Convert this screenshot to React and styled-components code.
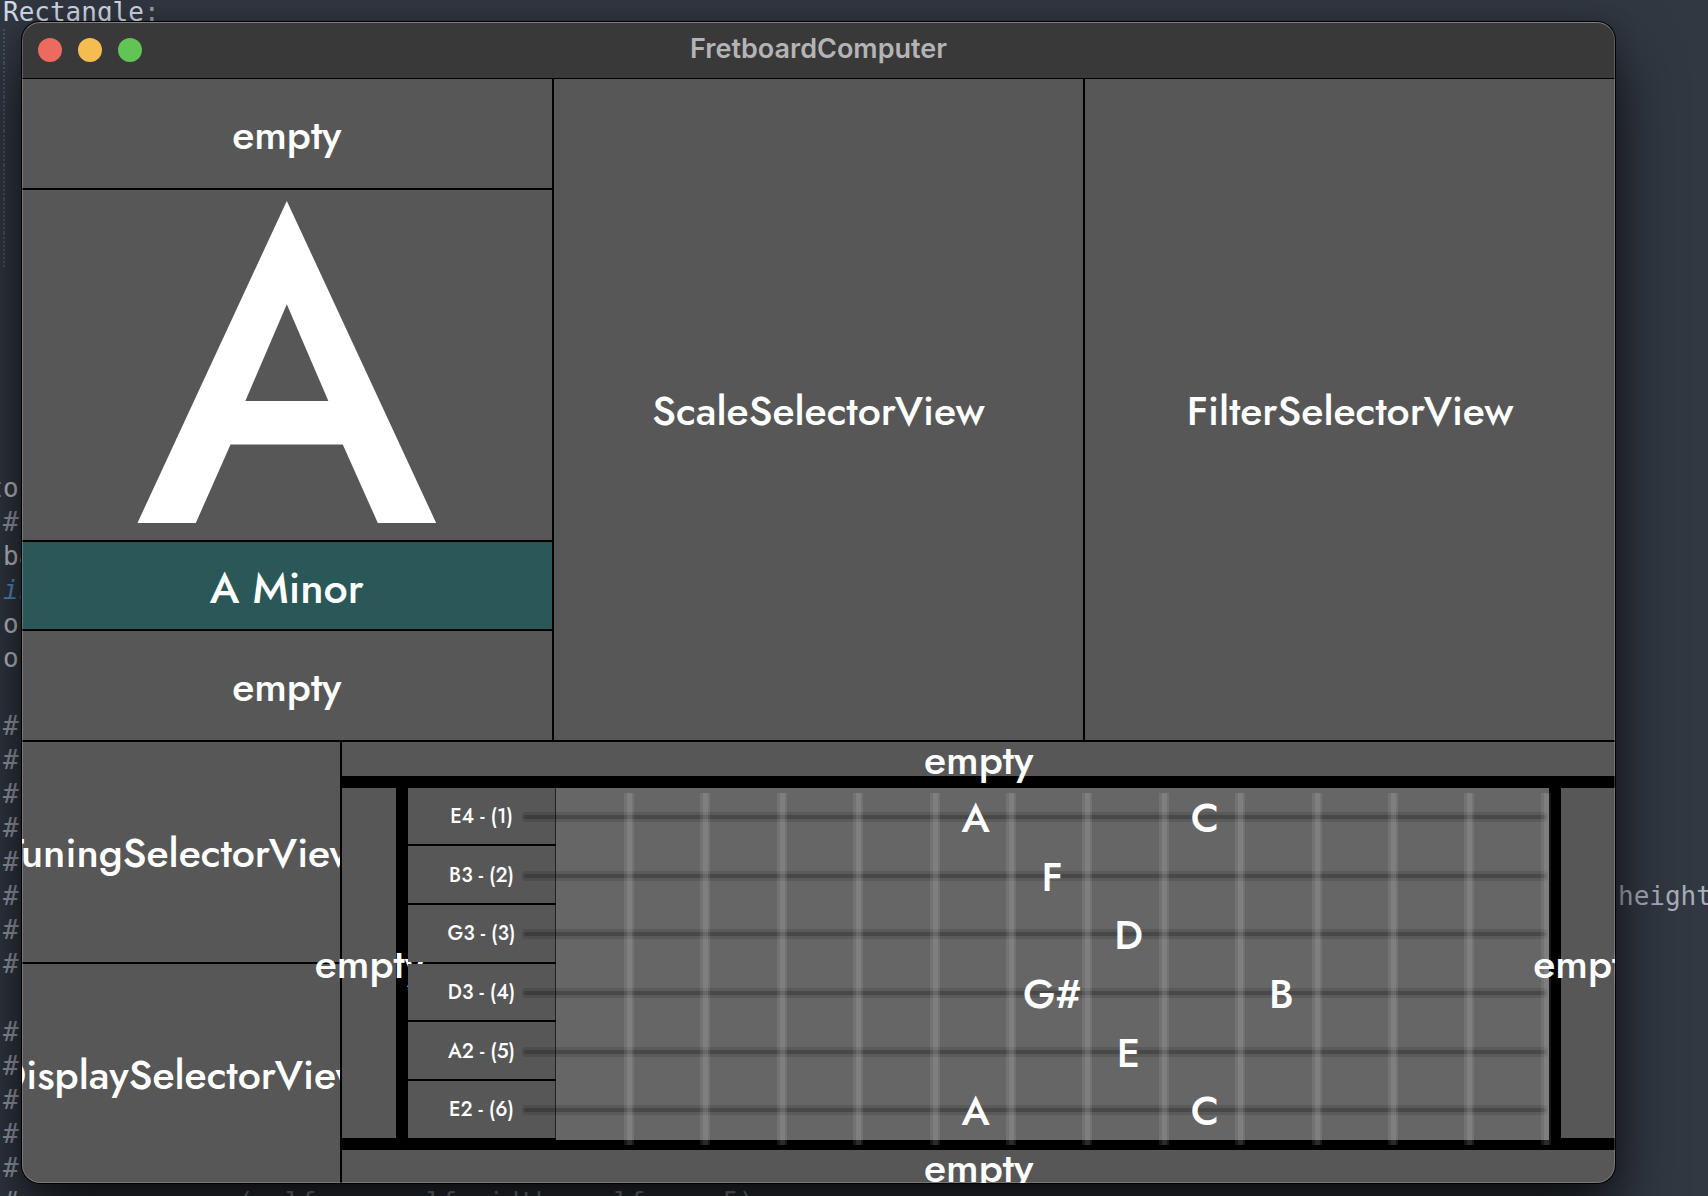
import React from 'react';
import styled, { createGlobalStyle } from 'styled-components';

const futura = `Futura, "Jost", "Lato", sans-serif`;

const GlobalStyle = createGlobalStyle`
  *, *::before, *::after { box-sizing: border-box; }
  body { margin: 0; background: #313842; }
`;

/* ---------- editor behind the window ---------- */

const Desktop = styled.div`
  position: relative;
  display: flex;
  height: 100vh;
  min-height: 720px;
  padding: 22px 93px 13px 22px;
  overflow: hidden;
  background: #313842;
`;

const Editor = styled.div`
  position: absolute;
  inset: -5px 0 0 3px;
  font-family: Menlo, "DejaVu Sans Mono", monospace;
  font-size: 26px;
  line-height: 34px;
  color: #9ba0ac;
`;

const CodeLine = styled.div`
  display: flex;
  height: 34px;
  white-space: pre;
  margin-left: ${(p) => (p.$outdent ? '-1ch' : '0')};
  color: ${(p) => p.$color || 'inherit'};
  font-style: ${(p) => (p.$italic ? 'italic' : 'normal')};
  border-left: ${(p) => (p.$guide ? '2px dotted #4a525d' : 'none')};
`;

const LineTail = styled.span`
  flex: 0 0 90px;
  width: 90px;
  min-width: 0;
  margin-left: auto;
  color: #a9aebc;
`;

const Punctuation = styled.span`
  color: #9a9fac;
`;

/* ---------- application window ---------- */

const AppWindow = styled.main`
  position: relative;
  flex: 1;
  display: flex;
  flex-direction: column;
  min-width: 0;
  border-radius: 18px;
  overflow: hidden;
  background: #000;
  box-shadow: 0 0 0 1px #000, 0 36px 64px rgba(0, 0, 0, 0.72), 0 0 24px rgba(0, 0, 0, 0.2);

  &::after {
    content: '';
    position: absolute;
    inset: 0;
    z-index: 5;
    border: 1px solid rgba(255, 255, 255, 0.2);
    border-top-color: rgba(255, 255, 255, 0.36);
    border-radius: inherit;
    pointer-events: none;
  }
`;

const TitleBar = styled.header`
  display: grid;
  grid-template-columns: 1fr auto 1fr;
  align-items: center;
  flex: 0 0 57px;
  padding: 0 16px;
  background: #393939;
  border-bottom: 1px solid #000;
`;

const WindowControls = styled.div`
  display: flex;
  gap: 16px;
`;

const ControlButton = styled.button`
  width: 24px;
  height: 24px;
  padding: 0;
  border: 0;
  border-radius: 50%;
  background: ${(p) => p.$color};
`;

const WindowTitle = styled.h1`
  margin: 0;
  padding-bottom: 2px;
  font: 600 27px/32px Inter, sans-serif;
  color: #b4b4b4;
`;

const Content = styled.div`
  flex: 1;
  display: grid;
  grid-template-rows: minmax(0, 3fr) minmax(0, 2fr);
  gap: 2px;
  min-height: 0;
`;

const Selectors = styled.div`
  display: grid;
  grid-template-columns: repeat(3, minmax(0, 1fr));
  gap: 2px;
  min-height: 0;
`;

const KeyColumn = styled.div`
  display: grid;
  grid-template-rows: minmax(0, 5fr) minmax(0, 16fr) minmax(0, 4fr) minmax(0, 5fr);
  gap: 2px;
  min-height: 0;
`;

const Lower = styled.div`
  display: grid;
  grid-template-columns: minmax(0, 1fr) minmax(0, 4fr);
  gap: 2px;
  min-height: 0;
`;

const SideViews = styled.div`
  display: grid;
  grid-template-rows: repeat(2, minmax(0, 1fr));
  gap: 2px;
  min-height: 0;
`;

const Panel = styled.section`
  display: flex;
  align-items: center;
  justify-content: center;
  min-width: 0;
  min-height: 0;
  padding-top: 3px;
  overflow: ${(p) => (p.$clip ? 'hidden' : 'visible')};
  position: ${(p) => (p.$raised ? 'relative' : 'static')};
  z-index: ${(p) => (p.$raised ? 2 : 'auto')};
  background: ${(p) => (p.$accent ? '#2a5757' : '#575757')};
  color: #fff;
  font: 500 41px/60px ${futura};
  white-space: nowrap;
`;

const KeyName = styled.span`
  padding-top: 2px;
  font-size: 43px;
`;

const KeyLetter = styled.span`
  padding-top: 12px;
  font-size: 436px;
  line-height: 1;
`;

const FretboardView = styled.div`
  display: grid;
  grid-template-rows: minmax(0, 2fr) minmax(0, 21fr) minmax(0, 2fr);
  gap: 12px;
  min-height: 0;
`;

const FretboardRow = styled.div`
  display: grid;
  grid-template-columns: minmax(0, 1fr) minmax(0, 21fr) minmax(0, 1fr);
  gap: 12px;
  min-height: 0;
`;

const Instrument = styled.div`
  position: relative;
  z-index: 1;
  display: grid;
  grid-template-columns: minmax(0, 4fr) minmax(0, 27fr);
  margin-bottom: -2px;
  min-height: 0;
`;

const TuningLabels = styled.ol`
  display: grid;
  grid-template-rows: repeat(6, minmax(0, 1fr));
  gap: 2px;
  margin: 0 0 2px;
  padding: 0;
  list-style: none;
`;

const TuningLabel = styled.li`
  display: flex;
  align-items: center;
  justify-content: center;
  padding-top: 2px;
  background: #575757;
  border-right: 1px solid #222;
  color: #fff;
  font: 500 20px/28px ${futura};
`;

const Board = styled.div`
  position: relative;
  display: grid;
  grid-template: repeat(6, minmax(0, 1fr)) / repeat(13, minmax(0, 1fr));
  background: #666;
`;

const Note = styled.span`
  grid-row: ${(p) => p.$string};
  grid-column: ${(p) => p.$fret};
  position: relative;
  z-index: 3;
  display: flex;
  align-items: center;
  justify-content: center;
  padding-top: 2px;
  color: #fff;
  font: 500 41px/52px ${futura};
`;

const Frets = styled.div`
  position: absolute;
  inset: 5px 0 -5px;
  z-index: 2;
  display: grid;
  grid-template-columns: repeat(13, minmax(0, 1fr));
`;

const Fret = styled.div`
  justify-self: end;
  width: 10px;
  margin-right: -2px;
  padding: 0 2px 0 3px;
  background: rgba(255, 255, 255, 0.09);

  &::before {
    content: '';
    display: block;
    height: 100%;
    background: rgba(255, 255, 255, 0.09);
  }
`;

const Strings = styled.div`
  position: absolute;
  inset: 0 1px 0 10%;
  z-index: 1;
  display: grid;
  grid-template-rows: repeat(6, minmax(0, 1fr));
  align-items: center;
`;

const GuitarString = styled.div`
  height: 10px;
  padding: 3px 2px;
  border-radius: 4px;
  background: rgba(0, 0, 0, 0.11);

  &::before {
    content: '';
    display: block;
    height: 4px;
    border-radius: 2px;
    background: rgba(0, 0, 0, 0.2);
  }
`;

const HASH = { text: '#' };
const lines = [
  { text: 'Rectangle', punctuation: ':', color: '#d3d9e6' },
  ...Array(7).fill({ guide: true }),
  ...Array(6).fill({}),
  { text: 'to', color: '#c4c8d0', outdent: true },
  HASH,
  { text: 'ba', color: '#c4c8d0' },
  { text: 'is', color: '#5b8fc7', italic: true },
  { text: 'o', color: '#c4c8d0' },
  { text: 'o', color: '#c4c8d0' },
  {},
  ...Array(5).fill(HASH),
  { text: '#', tail: 'height' },
  HASH,
  HASH,
  {},
  ...Array(5).fill(HASH),
  { text: '#              (self.x + self.width, self.x - 5)' },
];

const tuning = ['E4', 'B3', 'G3', 'D3', 'A2', 'E2'];

const notes = [
  { name: 'A', string: 1, fret: 6 },
  { name: 'C', string: 1, fret: 9 },
  { name: 'F', string: 2, fret: 7 },
  { name: 'D', string: 3, fret: 8 },
  { name: 'G#', string: 4, fret: 7 },
  { name: 'B', string: 4, fret: 10 },
  { name: 'E', string: 5, fret: 8 },
  { name: 'A', string: 6, fret: 6 },
  { name: 'C', string: 6, fret: 9 },
];

export default function App() {
  return (
    <Desktop>
      <GlobalStyle />
      <Editor aria-hidden="true">
        {lines.map((l, i) => (
          <CodeLine key={i} $color={l.color} $italic={l.italic} $outdent={l.outdent} $guide={l.guide}>
            {l.text}
            {l.punctuation && <Punctuation>{l.punctuation}</Punctuation>}
            {l.tail && <LineTail>{l.tail}</LineTail>}
          </CodeLine>
        ))}
      </Editor>

      <AppWindow>
        <TitleBar>
          <WindowControls>
            <ControlButton type="button" aria-label="Close" $color="#ed6a5e" />
            <ControlButton type="button" aria-label="Minimize" $color="#f5bd4f" />
            <ControlButton type="button" aria-label="Zoom" $color="#61c454" />
          </WindowControls>
          <WindowTitle>FretboardComputer</WindowTitle>
        </TitleBar>

        <Content>
          <Selectors>
            <KeyColumn>
              <Panel>empty</Panel>
              <Panel><KeyLetter>A</KeyLetter></Panel>
              <Panel $accent><KeyName>A Minor</KeyName></Panel>
              <Panel>empty</Panel>
            </KeyColumn>
            <Panel>ScaleSelectorView</Panel>
            <Panel>FilterSelectorView</Panel>
          </Selectors>

          <Lower>
            <SideViews>
              <Panel $clip>TuningSelectorView</Panel>
              <Panel $clip>DisplaySelectorView</Panel>
            </SideViews>
            <FretboardView>
              <Panel>empty</Panel>
              <FretboardRow>
                <Panel>empty</Panel>
                <Instrument>
                  <TuningLabels>
                    {tuning.map((t, i) => (
                      <TuningLabel key={t}>{`${t} - (${i + 1})`}</TuningLabel>
                    ))}
                  </TuningLabels>
                  <Board>
                    <Frets>
                      {Array.from({ length: 13 }, (_, i) => <Fret key={i} />)}
                    </Frets>
                    {notes.map((n) => (
                      <Note key={`${n.string}-${n.fret}`} $string={n.string} $fret={n.fret}>{n.name}</Note>
                    ))}
                  </Board>
                  <Strings>
                    {tuning.map((t) => <GuitarString key={t} />)}
                  </Strings>
                </Instrument>
                <Panel $raised>empty</Panel>
              </FretboardRow>
              <Panel>empty</Panel>
            </FretboardView>
          </Lower>
        </Content>
      </AppWindow>
    </Desktop>
  );
}
